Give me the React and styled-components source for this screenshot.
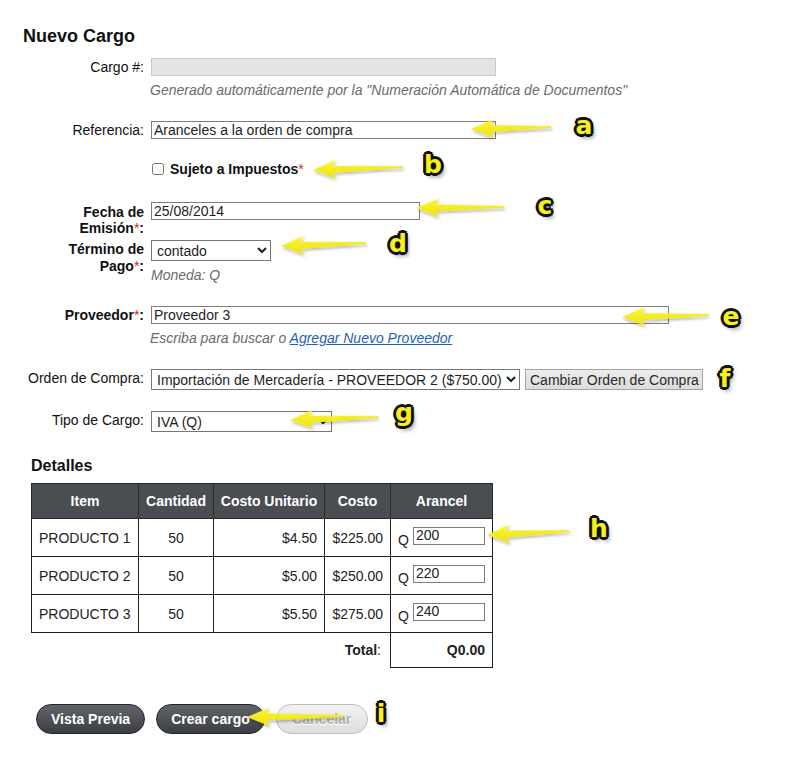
import React from 'react';
import styled, { createGlobalStyle } from 'styled-components';

const GlobalStyle = createGlobalStyle`
  body {
    margin: 0;
    background: #FFFFFF;
    font-family: "Liberation Sans", Arial, sans-serif;
    font-size: 14px;
    color: #1e1e1e;
  }
`;

const productos = [
  { name: 'PRODUCTO 1', qty: 50, unit: '$4.50', cost: '$225.00', arancel: '200' },
  { name: 'PRODUCTO 2', qty: 50, unit: '$5.00', cost: '$250.00', arancel: '220' },
  { name: 'PRODUCTO 3', qty: 50, unit: '$5.50', cost: '$275.00', arancel: '240' },
];

// callouts drawn over the form: tip of each arrow, its length and tail rise
const arrows = [
  { x: 471, y: 129, len: 80, rise: -2 },
  { x: 313, y: 170, len: 90, rise: -3 },
  { x: 416, y: 208, len: 88, rise: -1 },
  { x: 281, y: 246, len: 85, rise: -3 },
  { x: 622, y: 317, len: 86, rise: -2 },
  { x: 290, y: 420, len: 88, rise: -3 },
  { x: 487, y: 535, len: 82, rise: -4 },
  { x: 247, y: 717, len: 96, rise: -1 },
];

const markers = [
  { ch: 'a', x: 584, y: 125 },
  { ch: 'b', x: 433, y: 164 },
  { ch: 'c', x: 545, y: 205 },
  { ch: 'd', x: 398, y: 243 },
  { ch: 'e', x: 731, y: 316 },
  { ch: 'f', x: 725, y: 378 },
  { ch: 'g', x: 404, y: 412 },
  { ch: 'h', x: 599, y: 528 },
  { ch: 'i', x: 381, y: 713 },
];

const arrowPath = (len) =>
  `M0 0 L23 -9.5 Q20.5 -5.5 19.5 -3.5 L${len} -1 L${len} 1 L19.5 3.5 Q20.5 5.5 23 9.5 Z`;

const App = () => {
  return (
    <Page>
      <GlobalStyle />
      <Title>Nuevo Cargo</Title>

      <Row $top={11}>
        <Label>Cargo #:</Label>
        <Field>
          <TextInput $width={345} $disabled disabled value="" readOnly />
        </Field>
      </Row>
      <Hint $top={6}>Generado automáticamente por la "Numeración Automática de Documentos"</Hint>

      <Row $top={23}>
        <Label>Referencia:</Label>
        <Field>
          <TextInput $width={345} value="Aranceles a la orden de compra" readOnly />
        </Field>
      </Row>

      <Row $top={22}>
        <span />
        <CheckLine>
          <Check type="checkbox" />
          <strong>Sujeto a Impuestos</strong>
          <Required>*</Required>
        </CheckLine>
      </Row>

      <Row $top={25}>
        <Label $bold $pad={2}>Fecha de<br />Emisión<Required>*</Required>:</Label>
        <Field>
          <TextInput $width={269} value="25/08/2014" readOnly />
        </Field>
      </Row>

      <Row $top={4}>
        <Label $bold $pad={1}>Término de<br />Pago<Required>*</Required>:</Label>
        <Field>
          <Select $width={120} defaultValue="contado">
            <option value="contado">contado</option>
          </Select>
          <Hint $top={6} $flush>Moneda: Q</Hint>
        </Field>
      </Row>

      <Row $top={23}>
        <Label $bold>Proveedor<Required>*</Required>:</Label>
        <Field>
          <TextInput $width={518} value="Proveedor 3" readOnly />
        </Field>
      </Row>
      <Hint $top={6}>Escriba para buscar o <Link href="#">Agregar Nuevo Proveedor</Link></Hint>

      <Row $top={23}>
        <Label>Orden de Compra:</Label>
        <Field $inline>
          <Select $width={369} defaultValue="po2">
            <option value="po2">Importación de Mercadería - PROVEEDOR 2 ($750.00)</option>
          </Select>
          <GrayButton type="button">Cambiar Orden de Compra</GrayButton>
        </Field>
      </Row>

      <Row $top={21}>
        <Label>Tipo de Cargo:</Label>
        <Field>
          <Select $width={181} defaultValue="iva">
            <option value="iva">IVA (Q)</option>
          </Select>
        </Field>
      </Row>

      <Section>
        <SectionTitle>Detalles</SectionTitle>
        <Table>
          <colgroup>
            <col style={{ width: 107 }} />
            <col style={{ width: 75 }} />
            <col style={{ width: 111 }} />
            <col style={{ width: 66 }} />
            <col style={{ width: 102 }} />
          </colgroup>
          <thead>
            <tr>
              <Th>Item</Th>
              <Th>Cantidad</Th>
              <Th>Costo Unitario</Th>
              <Th>Costo</Th>
              <Th>Arancel</Th>
            </tr>
          </thead>
          <tbody>
            {productos.map(p => (
              <tr key={p.name}>
                <Td>{p.name}</Td>
                <Td $align="center">{p.qty}</Td>
                <Td $align="right">{p.unit}</Td>
                <Td $align="right">{p.cost}</Td>
                <Td>
                  <Currency>Q</Currency>
                  <CellInput value={p.arancel} readOnly />
                </Td>
              </tr>
            ))}
            <tr>
              <TotalLabel colSpan={4}><strong>Total</strong>:</TotalLabel>
              <TotalValue>Q0.00</TotalValue>
            </tr>
          </tbody>
        </Table>
      </Section>

      <Actions>
        <PillButton type="button">Vista Previa</PillButton>
        <PillButton type="button">Crear cargo</PillButton>
        <PillButton type="button" $muted disabled>Cancelar</PillButton>
      </Actions>

      <Overlay width="800" height="771" viewBox="0 0 800 771">
        <defs>
          <filter id="arrow-shadow" x="-20%" y="-100%" width="140%" height="300%">
            <feDropShadow dx="1" dy="2" stdDeviation="1.6" floodColor="#000" floodOpacity="0.3" />
          </filter>
          <linearGradient id="arrow-fill" x1="0" y1="0" x2="0" y2="1">
            <stop offset="0" stopColor="#fbf53a" />
            <stop offset="1" stopColor="#ece30c" />
          </linearGradient>
        </defs>
        {arrows.map((a, i) => {
          const angle = (Math.atan2(a.rise, a.len) * 180) / Math.PI;
          return (
            <path
              key={i}
              d={arrowPath(a.len)}
              fill="url(#arrow-fill)"
              filter="url(#arrow-shadow)"
              transform={`translate(${a.x} ${a.y}) rotate(${angle})`}
            />
          );
        })}
      </Overlay>

      {markers.map(m => (
        <Marker key={m.ch} style={{ left: m.x, top: m.y }}>{m.ch}</Marker>
      ))}
    </Page>
  );
};

export default App;

const Page = styled.div`
  position: relative;
  width: 800px;
  min-height: 771px;
  box-sizing: border-box;
  padding: 25px 0 0 23px;
`;

const Title = styled.h2`
  margin: 0;
  font-size: 18px;
  line-height: 22px;
  font-weight: bold;
  color: #111;
`;

const Row = styled.div`
  display: grid;
  grid-template-columns: 121px 1fr;
  column-gap: 7px;
  align-items: start;
  margin-top: ${props => props.$top || 0}px;
`;

const Label = styled.div`
  text-align: right;
  font-weight: ${props => (props.$bold ? 'bold' : 'normal')};
  line-height: ${props => (props.$pad === 1 ? 17 : 16)}px;
  padding-top: ${props => props.$pad || 1}px;
  color: #111;
`;

const Required = styled.span`
  color: #d02626;
  font-weight: normal;
`;

const Field = styled.div`
  display: flex;
  flex-direction: ${props => (props.$inline ? 'row' : 'column')};
  align-items: flex-start;
  gap: ${props => (props.$inline ? '5px' : '0')};
`;

const TextInput = styled.input`
  box-sizing: border-box;
  width: ${props => props.$width}px;
  height: 18px;
  margin: 0;
  padding: 0 2px;
  font-family: inherit;
  font-size: 14px;
  color: #1e1e1e;
  background: ${props => (props.$disabled ? '#e4e4e4' : '#FFFFFF')};
  border: 1px solid ${props => (props.$disabled ? '#c9c9c9' : '#7d7d7d')};
  border-radius: 0;
  outline: none;
`;

const Select = styled.select`
  box-sizing: border-box;
  width: ${props => props.$width}px;
  height: 21px;
  margin: 0;
  padding: 0 0 0 1px;
  font-family: inherit;
  font-size: 14px;
  color: #1e1e1e;
  background: #FFFFFF;
  border: 1px solid #767676;
  border-radius: 0;
`;

const GrayButton = styled.button`
  box-sizing: border-box;
  height: 21px;
  width: 178px;
  padding: 0 4px;
  font-family: inherit;
  font-size: 14px;
  white-space: nowrap;
  color: #2a2a2a;
  background: linear-gradient(#ececec, #dcdcdc);
  border: 1px solid #a3a3a3;
  border-radius: 0;
`;

const Hint = styled.div`
  margin-top: ${props => props.$top || 0}px;
  margin-left: ${props => (props.$flush ? 0 : 127)}px;
  font-style: italic;
  line-height: 16px;
  color: #6b6b6b;
`;

const Link = styled.a`
  color: #1d62b8;
  text-decoration: underline;
`;

const CheckLine = styled.label`
  display: flex;
  align-items: center;
  height: 16px;
  font-size: 14px;
  color: #111;
`;

const Check = styled.input`
  width: 12px;
  height: 12px;
  margin: 0 6px 0 1px;
`;

const Section = styled.section`
  margin: 24px 0 0 8px;
`;

const SectionTitle = styled.h3`
  margin: 0 0 8px;
  font-size: 16px;
  line-height: 19px;
  font-weight: bold;
  color: #111;
`;

const Table = styled.table`
  border-collapse: collapse;
  table-layout: fixed;
  width: 461px;
  font-size: 14px;
`;

const Th = styled.th`
  height: 34px;
  padding: 0 6px;
  background: #4a4d51;
  color: #FFFFFF;
  font-weight: bold;
  text-align: center;
  border: 1px solid #2a2a2a;
  white-space: nowrap;
`;

const Td = styled.td`
  height: 37px;
  padding: 0 7px;
  text-align: ${props => props.$align || 'left'};
  border: 1px solid #1e1e1e;
  color: #222;
  white-space: nowrap;
`;

const Currency = styled.span`
  display: inline-block;
  width: 15px;
  vertical-align: -5px;
`;

const CellInput = styled.input`
  box-sizing: border-box;
  width: 72px;
  height: 18px;
  margin: 0;
  padding: 0 2px 2px;
  font-family: inherit;
  font-size: 14px;
  line-height: 14px;
  color: #222;
  border: 1px solid #7d7d7d;
  border-radius: 0;
  vertical-align: middle;
`;

const TotalLabel = styled.td`
  height: 34px;
  padding: 0 9px;
  text-align: right;
  border: none;
  color: #222;
`;

const TotalValue = styled.td`
  padding: 0 7px;
  text-align: right;
  font-weight: bold;
  color: #222;
  border: 1px solid #1e1e1e;
`;

const Actions = styled.div`
  display: flex;
  gap: 11px;
  margin: 36px 0 0 13px;
`;

const PillButton = styled.button`
  box-sizing: border-box;
  height: 30px;
  min-width: ${props => (props.$muted ? 92 : 108)}px;
  padding: 0 14px;
  font-family: inherit;
  font-size: 14px;
  font-weight: bold;
  border-radius: 15px;
  color: ${props => (props.$muted ? '#b4b4b4' : '#FFFFFF')};
  background: ${props => (props.$muted
    ? 'linear-gradient(#f2f2f2, #dedede)'
    : 'linear-gradient(#61656a, #3b3e42)')};
  border: 1px solid ${props => (props.$muted ? '#bdbdbd' : '#262626')};
  text-shadow: ${props => (props.$muted ? '0 1px 0 #fff' : 'none')};
`;

const Overlay = styled.svg`
  position: absolute;
  top: 0;
  left: 0;
  pointer-events: none;
  overflow: visible;
`;

const Marker = styled.span`
  position: absolute;
  transform: translate(-50%, -50%);
  font-family: "DejaVu Sans", sans-serif;
  font-weight: bold;
  font-size: 25px;
  line-height: 1;
  color: #f6f01e;
  text-shadow:
    2px 0 0 #111, -2px 0 0 #111, 0 2px 0 #111, 0 -2px 0 #111,
    2px 2px 0 #111, -2px -2px 0 #111, 2px -2px 0 #111, -2px 2px 0 #111,
    3px 0 0 #111, -3px 0 0 #111, 0 3px 0 #111, 0 -3px 0 #111,
    3px 4px 4px rgba(0, 0, 0, 0.45);
`;
